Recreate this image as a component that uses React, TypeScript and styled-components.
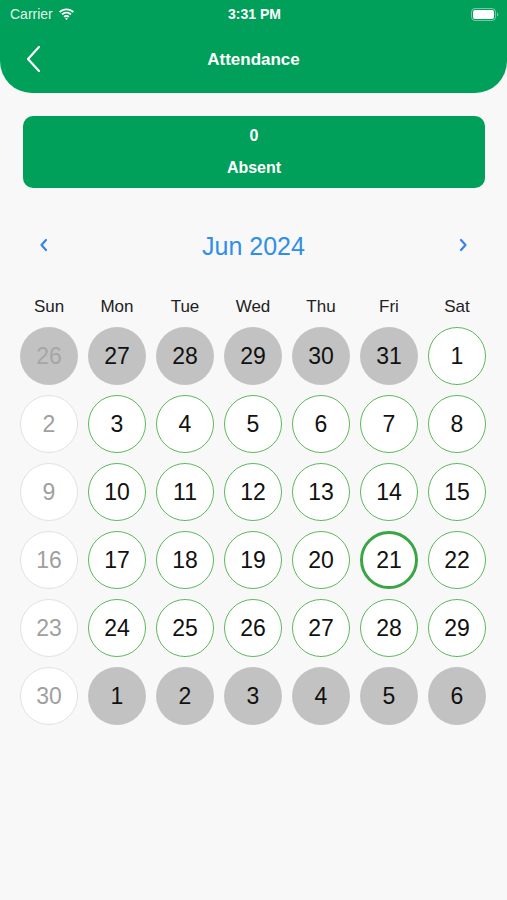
import React from 'react'
import styled, { createGlobalStyle } from 'styled-components'

const GlobalStyle = createGlobalStyle`
  html, body {
    margin: 0;
    padding: 0;
    background: #f8f8f8;
    font-family: "Liberation Sans", Arial, sans-serif;
  }
`

const Page = styled.div`
  width: 507px;
  min-height: 900px;
  background: #f8f8f8;
`

const Header = styled.header`
  background: #00a05a;
  height: 93px;
  border-bottom-left-radius: 32px;
  border-bottom-right-radius: 32px;
  display: flex;
  flex-direction: column;
  color: #fff;
`

const StatusBar = styled.div`
  height: 28px;
  display: grid;
  grid-template-columns: 1fr auto 1fr;
  align-items: center;
  padding: 0 8px 0 10px;
  font-size: 14px;
`

const Carrier = styled.div`
  display: flex;
  align-items: center;
  gap: 5px;
  color: rgba(255, 255, 255, 0.9);
`

const Clock = styled.div`
  font-weight: bold;
  font-size: 14px;
`

const Battery = styled.div`
  justify-self: end;
  display: flex;
  align-items: center;
`

const NavBar = styled.div`
  flex: 1;
  display: flex;
  align-items: center;
  justify-content: center;
  position: relative;
  padding-bottom: 1px;
`

const BackButton = styled.div`
  position: absolute;
  left: 26px;
  top: 17px;
  display: flex;
`

const Title = styled.h1`
  margin: 0;
  font-size: 17px;
  font-weight: bold;
`

const Summary = styled.div`
  margin: 23px 22px 0 23px;
  height: 72px;
  border-radius: 10px;
  background: #00a05a;
  color: #fff;
  display: flex;
  flex-direction: column;
  align-items: center;
  justify-content: center;
  gap: 14px;
  font-weight: bold;
  font-size: 16px;
`

const MonthRow = styled.div`
  margin-top: 42px;
  display: flex;
  align-items: center;
  justify-content: space-between;
  padding: 0 38px;
  height: 30px;
`

const Arrow = styled.div`
  display: flex;
  color: #3b82e6;
`

const MonthLabel = styled.div`
  font-size: 25px;
  color: #2f8fe8;
  padding-top: 2px;
`

const Grid = styled.div`
  display: grid;
  grid-template-columns: repeat(7, 58px);
  column-gap: 10px;
  row-gap: 10px;
  padding: 0 20px;
`

const WeekDay = styled.div`
  margin-top: 37px;
  text-align: center;
  font-size: 17px;
  color: #222;
  height: 20px;
`

type Kind = 'outside' | 'past' | 'muted' | 'present' | 'today'

const Day = styled.div<{ $kind: Kind }>`
  width: 58px;
  height: 58px;
  box-sizing: border-box;
  border-radius: 50%;
  display: flex;
  align-items: center;
  justify-content: center;
  font-size: 23px;
  background: ${p => (p.$kind === 'outside' || p.$kind === 'past' ? '#c2c2c2' : '#fff')};
  color: ${p => (p.$kind === 'muted' ? '#a0a0a0' : p.$kind === 'past' ? '#a6a6a6' : '#111')};
  border: ${p =>
    p.$kind === 'today'
      ? '3px solid #3aa544'
      : p.$kind === 'present'
      ? '1px solid #5cb85c'
      : p.$kind === 'muted'
      ? '1px solid #e2e2e2'
      : 'none'};
`

const weekDays = ['Sun', 'Mon', 'Tue', 'Wed', 'Thu', 'Fri', 'Sat']

function buildDays(): { n: number; kind: Kind }[] {
  const days: { n: number; kind: Kind }[] = []
  days.push({ n: 26, kind: 'past' })
  for (let n = 27; n <= 31; n++) days.push({ n, kind: 'outside' })
  for (let n = 1; n <= 30; n++) {
    const col = days.length % 7
    if (n === 21) days.push({ n, kind: 'today' })
    else if (col === 0) days.push({ n, kind: 'muted' })
    else days.push({ n, kind: 'present' })
  }
  for (let n = 1; n <= 6; n++) days.push({ n, kind: 'outside' })
  return days
}

export default function App() {
  const days = buildDays()
  return (
    <Page>
      <GlobalStyle />
      <Header>
        <StatusBar>
          <Carrier>
            Carrier
            <svg width="17" height="12" viewBox="0 0 17 12">
              <path d="M8.5 2.2c2.4 0 4.6.9 6.3 2.5l1.2-1.3C14 1.4 11.4.4 8.5.4S3 1.4 1 3.4l1.2 1.3c1.7-1.6 3.9-2.5 6.3-2.5z" fill="#fff" />
              <path d="M8.5 5.6c1.5 0 2.8.6 3.9 1.5l1.2-1.3C12.2 4.5 10.4 3.8 8.5 3.8s-3.7.7-5.1 2l1.2 1.3c1.1-.9 2.4-1.5 3.9-1.5z" fill="#fff" />
              <path d="M8.5 8.9c.7 0 1.3.3 1.8.7l1.2-1.3c-.8-.7-1.9-1.2-3-1.2s-2.2.5-3 1.2l1.2 1.3c.5-.4 1.1-.7 1.8-.7zM8.5 12l1.5-1.5c-.4-.4-.9-.6-1.5-.6s-1.1.2-1.5.6z" fill="#fff" />
            </svg>
          </Carrier>
          <Clock>3:31 PM</Clock>
          <Battery>
            <svg width="28" height="13" viewBox="0 0 28 13">
              <rect x="0.5" y="0.5" width="24" height="12" rx="3.5" fill="none" stroke="rgba(255,255,255,0.45)" />
              <rect x="2" y="2" width="21" height="9" rx="2" fill="#fff" />
              <path d="M26 4.5v4c.8-.3 1.3-1.1 1.3-2s-.5-1.7-1.3-2z" fill="rgba(255,255,255,0.45)" />
            </svg>
          </Battery>
        </StatusBar>
        <NavBar>
          <BackButton>
            <svg width="16" height="28" viewBox="0 0 16 28">
              <path d="M13 2L2 14l11 12" fill="none" stroke="#fff" strokeWidth="2.2" strokeLinecap="round" strokeLinejoin="round" />
            </svg>
          </BackButton>
          <Title>Attendance</Title>
        </NavBar>
      </Header>

      <Summary>
        <div>0</div>
        <div>Absent</div>
      </Summary>

      <MonthRow>
        <Arrow>
          <svg width="12" height="16" viewBox="0 0 12 16">
            <path d="M8 3L3.5 8 8 13" fill="none" stroke="currentColor" strokeWidth="2.2" strokeLinecap="round" strokeLinejoin="round" />
          </svg>
        </Arrow>
        <MonthLabel>Jun 2024</MonthLabel>
        <Arrow>
          <svg width="12" height="16" viewBox="0 0 12 16">
            <path d="M4 3l4.5 5L4 13" fill="none" stroke="currentColor" strokeWidth="2.2" strokeLinecap="round" strokeLinejoin="round" />
          </svg>
        </Arrow>
      </MonthRow>

      <Grid>
        {weekDays.map(d => (
          <WeekDay key={d}>{d}</WeekDay>
        ))}
        {days.map((d, i) => (
          <Day key={i} $kind={d.kind}>
            {d.n}
          </Day>
        ))}
      </Grid>
    </Page>
  )
}
